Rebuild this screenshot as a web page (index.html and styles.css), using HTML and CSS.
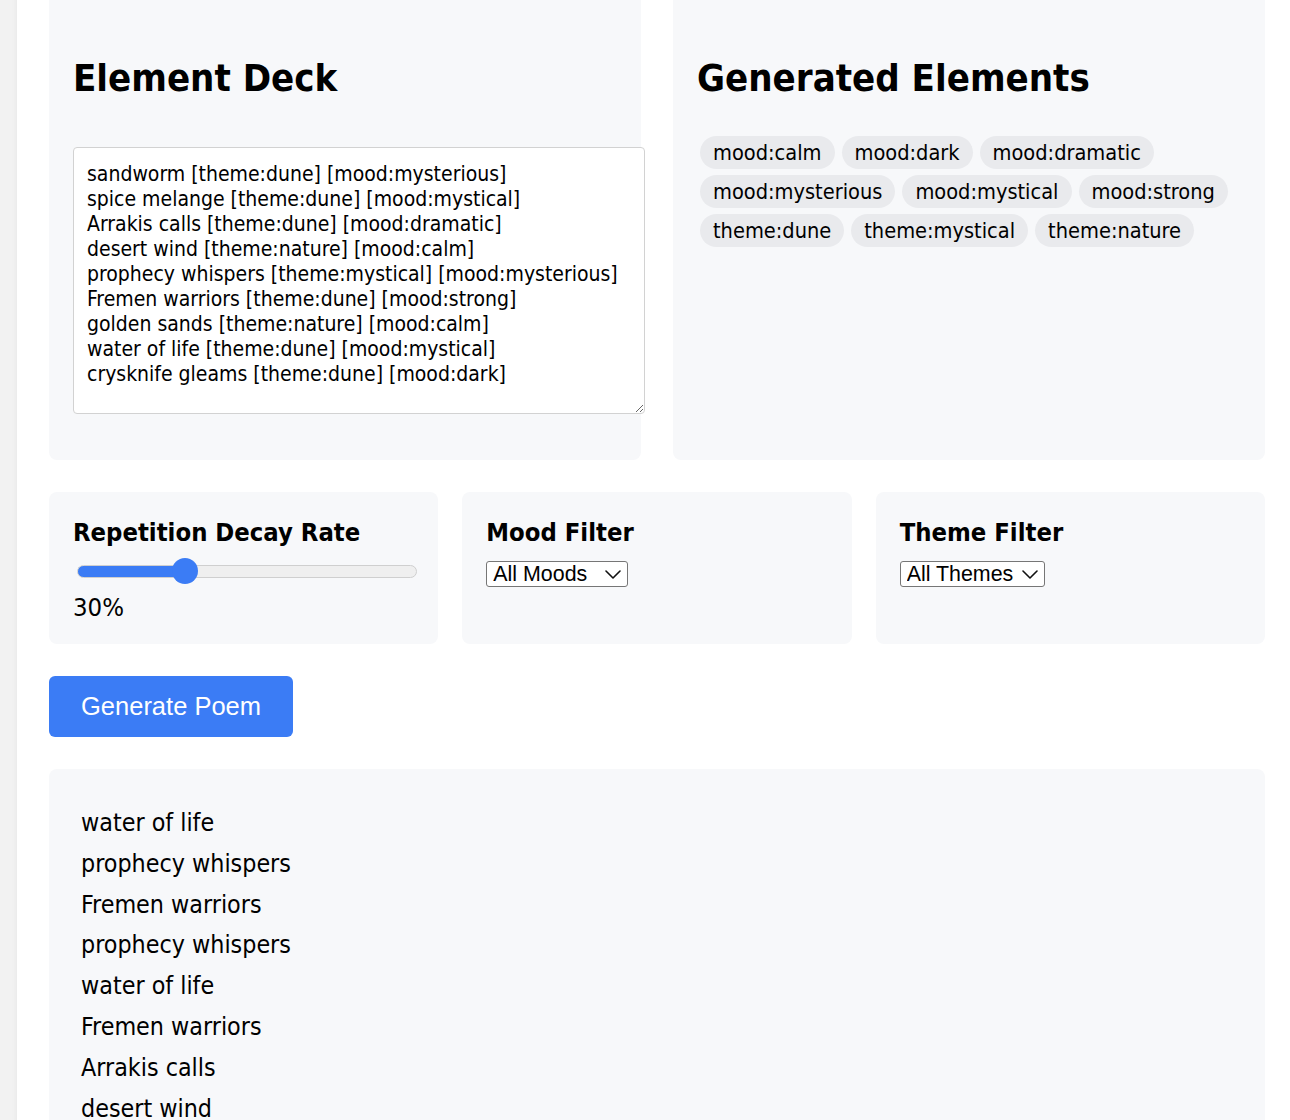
FILE: index.html
```html
<!DOCTYPE html>
<html lang="en">
<head>
<meta charset="utf-8">
<title>Element Deck Poem Generator</title>
<link rel="stylesheet" href="styles.css">
</head>
<body>
<div class="page">
  <div class="top-row">
    <section class="card deck-card">
      <h2 class="card-title">Element Deck</h2>
      <textarea class="deck-input" spellcheck="false">sandworm [theme:dune] [mood:mysterious]
spice melange [theme:dune] [mood:mystical]
Arrakis calls [theme:dune] [mood:dramatic]
desert wind [theme:nature] [mood:calm]
prophecy whispers [theme:mystical] [mood:mysterious]
Fremen warriors [theme:dune] [mood:strong]
golden sands [theme:nature] [mood:calm]
water of life [theme:dune] [mood:mystical]
crysknife gleams [theme:dune] [mood:dark]</textarea>
    </section>
    <section class="card">
      <h2 class="card-title">Generated Elements</h2>
      <div class="tags">
        <span class="tag">mood:calm</span>
        <span class="tag">mood:dark</span>
        <span class="tag">mood:dramatic</span>
        <span class="tag">mood:mysterious</span>
        <span class="tag">mood:mystical</span>
        <span class="tag">mood:strong</span>
        <span class="tag">theme:dune</span>
        <span class="tag">theme:mystical</span>
        <span class="tag">theme:nature</span>
      </div>
    </section>
  </div>

  <div class="controls">
    <section class="card control">
      <h3 class="control-title">Repetition Decay Rate</h3>
      <input class="decay" type="range" min="0" max="100" value="30">
      <div class="decay-value">30%</div>
    </section>
    <section class="card control">
      <h3 class="control-title">Mood Filter</h3>
      <span class="select-wrap">
        <select class="filter">
          <option>All Moods</option>
          <option>calm</option>
          <option>dark</option>
          <option>dramatic</option>
          <option>mysterious</option>
          <option>mystical</option>
          <option>strong</option>
        </select>
        <svg class="chev" width="16" height="9" viewBox="0 0 16 9"><path d="M1 1l7 7 7-7" fill="none" stroke="#111" stroke-width="1.6" stroke-linecap="round" stroke-linejoin="round"/></svg>
      </span>
    </section>
    <section class="card control">
      <h3 class="control-title">Theme Filter</h3>
      <span class="select-wrap">
        <select class="filter">
          <option>All Themes</option>
          <option>dune</option>
          <option>mystical</option>
          <option>nature</option>
        </select>
        <svg class="chev" width="16" height="9" viewBox="0 0 16 9"><path d="M1 1l7 7 7-7" fill="none" stroke="#111" stroke-width="1.6" stroke-linecap="round" stroke-linejoin="round"/></svg>
      </span>
    </section>
  </div>

  <button class="generate" type="button">Generate Poem</button>

  <section class="card poem">
    <div class="poem-line">water of life</div>
    <div class="poem-line">prophecy whispers</div>
    <div class="poem-line">Fremen warriors</div>
    <div class="poem-line">prophecy whispers</div>
    <div class="poem-line">water of life</div>
    <div class="poem-line">Fremen warriors</div>
    <div class="poem-line">Arrakis calls</div>
    <div class="poem-line">desert wind</div>
    <div class="poem-line">golden sands</div>
    <div class="poem-line">spice melange</div>
  </section>
</div>
</body>
</html>
```

FILE: styles.css
```css
html {
  overflow-x: hidden;
  background: #f2f2f2;
}

body {
  margin: 0;
  padding-left: 17px;
  font-family: "DejaVu Sans Condensed", "DejaVu Sans", sans-serif;
  color: #000;
}

.page {
  width: 1216px;
  padding: 0 32px 40px;
  background: #fff;
  box-shadow: 0 0 6px rgba(0, 0, 0, 0.06);
  margin-top: -8px;
}

.card {
  background: #f7f8fa;
  border-radius: 8px;
  padding: 24px;
}

.top-row {
  display: grid;
  grid-template-columns: minmax(0, 1fr) minmax(0, 1fr);
  gap: 32px;
  margin-bottom: 32px;
}

.card-title {
  font-size: 38px;
  font-weight: bold;
  line-height: 44px;
  margin: 40px 0 47px;
}

.deck-input {
  display: block;
  width: 100%;
  height: 239px;
  padding: 14px 13px 12px;
  margin: 0 0 22px;
  border: 1px solid #d2d2d2;
  border-radius: 4px;
  background: #fff;
  font-family: inherit;
  font-size: 21px;
  line-height: 25px;
  color: #000;
  resize: vertical;
}

.tags {
  display: flex;
  flex-wrap: wrap;
  gap: 6px 7px;
  margin: -11px 0 0 3px;
}

.tag {
  background: #e9eaed;
  border-radius: 999px;
  padding: 4px 13px;
  font-size: 21.6px;
  line-height: 25px;
}

.controls {
  display: grid;
  grid-template-columns: repeat(3, minmax(0, 1fr));
  gap: 24px;
  margin-bottom: 32px;
}

.control {
  padding-bottom: 22px;
}

.control-title {
  font-size: 25.4px;
  font-weight: bold;
  line-height: 29px;
  margin: 2px 0 14px;
}

.decay {
  -webkit-appearance: none;
  appearance: none;
  display: block;
  width: 340px;
  height: 26px;
  margin: -3px 0 9px 4px;
  background: transparent;
}

.decay::-webkit-slider-runnable-track {
  height: 13px;
  border-radius: 7px;
  border: 1px solid #cfcfcf;
  background: linear-gradient(to right, #3b7cf5 0, #3b7cf5 32%, #efefef 32%, #efefef 100%);
  box-sizing: border-box;
}

.decay::-webkit-slider-thumb {
  -webkit-appearance: none;
  appearance: none;
  width: 26px;
  height: 26px;
  border-radius: 50%;
  background: #3b7cf5;
  border: none;
  margin-top: -7.5px;
}

.decay-value {
  font-size: 25.5px;
  line-height: 29px;
}

.select-wrap {
  position: relative;
  display: inline-block;
}

.filter {
  -webkit-appearance: none;
  appearance: none;
  font-family: "Liberation Sans", Arial, sans-serif;
  font-size: 21.4px;
  line-height: 24px;
  height: 26px;
  padding: 0 30px 0 6px;
  border: 1px solid #767676;
  border-radius: 3px;
  background: #fff;
  color: #000;
}

.chev {
  position: absolute;
  right: 7px;
  top: 9px;
  pointer-events: none;
}

.generate {
  display: block;
  border: none;
  border-radius: 6px;
  background: #3b7cf5;
  color: #fff;
  font-family: "Liberation Sans", Arial, sans-serif;
  font-size: 25.5px;
  line-height: 29px;
  padding: 16px 32px;
  margin: 0 0 32px;
}

.poem {
  padding: 34px 32px 32px;
}

.poem-line {
  font-size: 24.8px;
  line-height: 40.8px;
}
```
